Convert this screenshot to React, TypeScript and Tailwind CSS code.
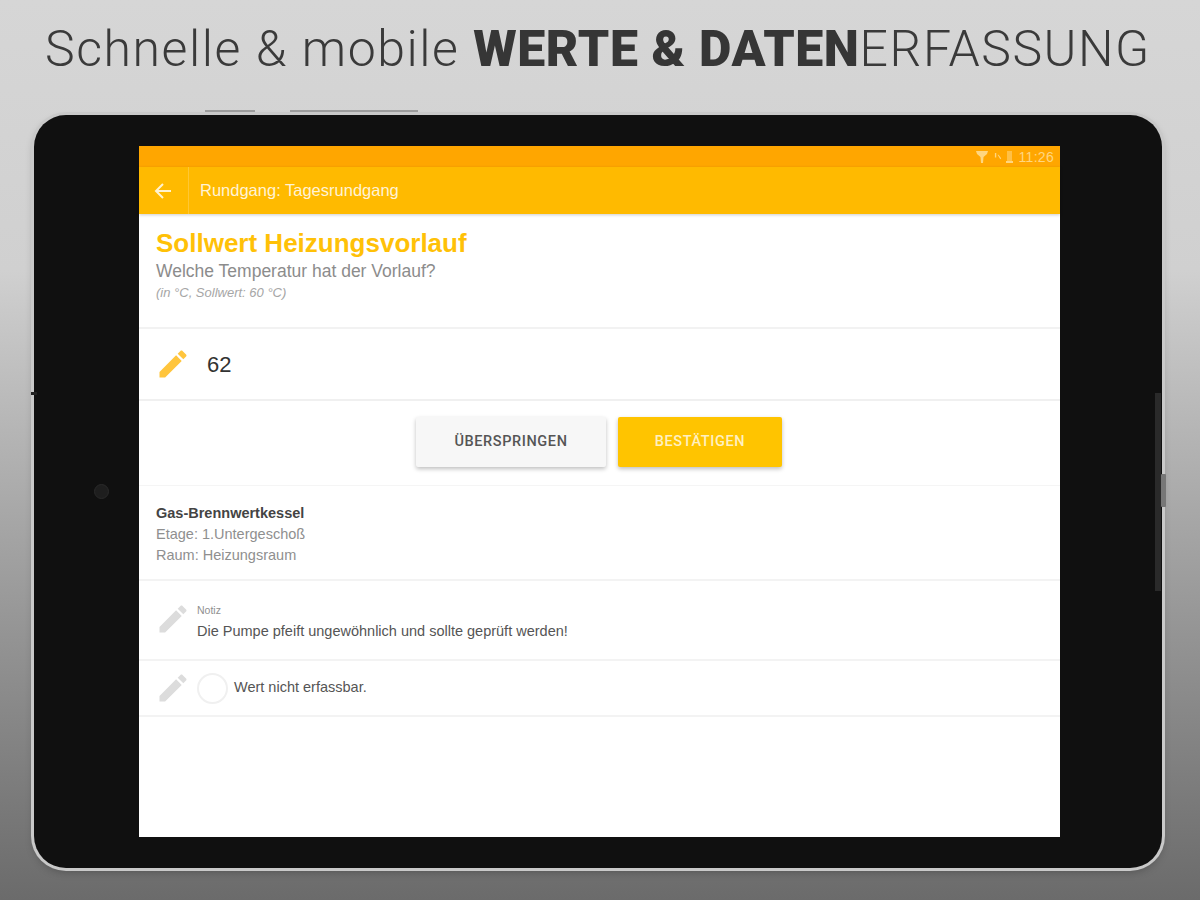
import React from 'react';

const EDIT_PATH =
  'M3 17.25V21h3.75L17.81 9.94l-3.75-3.75L3 17.25zM20.71 7.04c.39-.39.39-1.02 0-1.41l-2.34-2.34c-.39-.39-1.02-.39-1.41 0l-1.83 1.83 3.75 3.75 1.83-1.83z';

function Pencil({ className }: { className: string }) {
  return (
    <svg viewBox="0 0 24 24" className={className} fill="currentColor">
      <path d={EDIT_PATH} />
    </svg>
  );
}

function StatusBar() {
  return (
    <div className="h-[21px] shrink-0 bg-[#ffa600] flex items-center justify-end pr-[6px] gap-[3px] text-[#ffd680]">
      <svg viewBox="0 0 14 14" className="w-[14px] h-[14px]" fill="currentColor">
        <path d="M1 1h12l-1 3-3.5 3L8 13H6L5.5 7 2 4z" />
      </svg>
      <svg viewBox="0 0 10 10" className="w-[9px] h-[9px] ml-[2px]" fill="currentColor">
        <path d="M1 1h1.5v5H1zM4 3l1 0 3 4-1 1z" />
      </svg>
      <svg viewBox="0 0 7 14" className="w-[7px] h-[14px]" fill="currentColor">
        <path d="M1 1h5v10H1z" opacity="0.55" />
        <path d="M0 11h7v2H0z" />
      </svg>
      <span className="text-[14px] leading-none ml-[3px] tracking-[0.3px]">11:26</span>
    </div>
  );
}

function Toolbar() {
  return (
    <div className="h-[47px] shrink-0 bg-[#ffba00] flex items-center shadow-[0_1px_3px_rgba(0,0,0,0.2)] relative">
      <div className="w-[50px] h-full flex items-center justify-center pr-[2px] border-r border-[#ffc733]">
        <svg viewBox="0 0 24 24" className="w-[24px] h-[24px]" fill="none" stroke="#fff3d0" strokeWidth="2">
          <path d="M20 12H5M12 5l-7 7 7 7" />
        </svg>
      </div>
      <span className="ml-[11px] text-[16.5px] font-medium text-[#fff3d6]">Rundgang: Tagesrundgang</span>
    </div>
  );
}

export default function App() {
  return (
    <div className="relative w-[1200px] h-[900px] overflow-hidden bg-gradient-to-b from-[#d6d6d6] via-[#d0d0d0] via-30% to-[#6b6b6b] font-['Liberation_Sans',sans-serif]">
      <h1 className="h-[115px] pt-[19px] pl-[45px] font-['Roboto',sans-serif] font-light text-[50px] leading-[60px] tracking-[1.55px] text-[#3a3a3a] whitespace-nowrap">
        Schnelle &amp; mobile <b className="font-black tracking-[0.6px] text-[#363636]">WERTE &amp; DATEN</b>ERFASSUNG
      </h1>

      {/* tablet */}
      <div className="relative ml-[34px] w-[1128px] h-[753px] bg-[#101010] rounded-[32px] pt-[31px] pl-[105px] shadow-[0_0_0_3px_#c9c9c9,0_4px_8px_rgba(0,0,0,0.25)]">
        <div className="absolute -top-[5px] left-[171px] w-[50px] h-[2px] bg-[#9c9c9c]" />
        <div className="absolute -top-[5px] left-[256px] w-[128px] h-[2px] bg-[#9c9c9c]" />
        <div className="absolute top-[277px] -left-[3px] w-[6px] h-[3px] bg-[#222]" />
        <div className="absolute top-[369px] left-[60px] w-[15px] h-[15px] rounded-full bg-[#1e1e1e] border border-[#2a2a2a]" />
        <div className="absolute top-[278px] right-[1px] w-[6px] h-[198px] bg-[#2a2a2a]" />
        <div className="absolute top-[359px] -right-[4px] w-[5px] h-[33px] bg-[#777] rounded-[1px]" />

        {/* screen */}
        <div className="w-[921px] h-[691px] bg-white flex flex-col">
          <StatusBar />
          <Toolbar />

          <div className="h-[115px] shrink-0 border-b-2 border-[#f2f2f2] pt-[13px] pl-[17px]">
            <div className="text-[26px] leading-[32px] font-bold text-[#ffc107]">Sollwert Heizungsvorlauf</div>
            <div className="text-[17.5px] leading-[24px] text-[#8c8c8c]">Welche Temperatur hat der Vorlauf?</div>
            <div className="text-[13px] leading-[20px] italic text-[#a6a6a6]">(in °C, Sollwert: 60 °C)</div>
          </div>

          <div className="h-[72px] shrink-0 border-b-2 border-[#f0f0f0] flex items-center pl-[16px]">
            <Pencil className="w-[36px] h-[36px] text-[#ffc53d]" />
            <span className="ml-[16px] text-[22px] text-[#333]">62</span>
          </div>

          <div className="h-[85px] shrink-0 border-b border-[#f5f5f5] flex items-center justify-center gap-[12px] pb-[3px] pr-[1px]">
            <div className="w-[190px] h-[50px] bg-[#f7f7f7] rounded-[2px] shadow-[0_2px_4px_rgba(0,0,0,0.25)] flex items-center justify-center text-[14.5px] tracking-[0.6px] text-[#555] font-['Roboto',sans-serif] font-medium">
              ÜBERSPRINGEN
            </div>
            <div className="w-[164px] h-[50px] bg-[#ffc400] rounded-[2px] shadow-[0_2px_4px_rgba(0,0,0,0.25)] flex items-center justify-center text-[14.5px] tracking-[0.6px] text-[#fff0c2] font-['Roboto',sans-serif] font-medium">
              BESTÄTIGEN
            </div>
          </div>

          <div className="h-[95px] shrink-0 border-b-2 border-[#f3f3f3] pt-[17px] pl-[17px] text-[14.5px] leading-[21px] text-[#8f8f8f]">
            <div className="font-bold text-[#444]">Gas-Brennwertkessel</div>
            <div>Etage: 1.Untergeschoß</div>
            <div>Raum: Heizungsraum</div>
          </div>

          <div className="h-[80px] shrink-0 border-b-2 border-[#f3f3f3] flex pl-[16px] pt-[20px]">
            <Pencil className="w-[36px] h-[36px] text-[#dcdcdc]" />
            <div className="ml-[6px]">
              <div className="text-[10.5px] leading-[18px] text-[#909090]">Notiz</div>
              <div className="text-[14.5px] leading-[24px] text-[#555]">Die Pumpe pfeift ungewöhnlich und sollte geprüft werden!</div>
            </div>
          </div>

          <div className="h-[56px] shrink-0 border-b-2 border-[#f3f3f3] flex items-center pl-[16px]">
            <Pencil className="w-[36px] h-[36px] text-[#dcdcdc]" />
            <div className="ml-[6px] w-[31px] h-[31px] rounded-full border-2 border-[#f0f0f0]" />
            <span className="ml-[6px] text-[14.5px] text-[#555]">Wert nicht erfassbar.</span>
          </div>
        </div>
      </div>
    </div>
  );
}
